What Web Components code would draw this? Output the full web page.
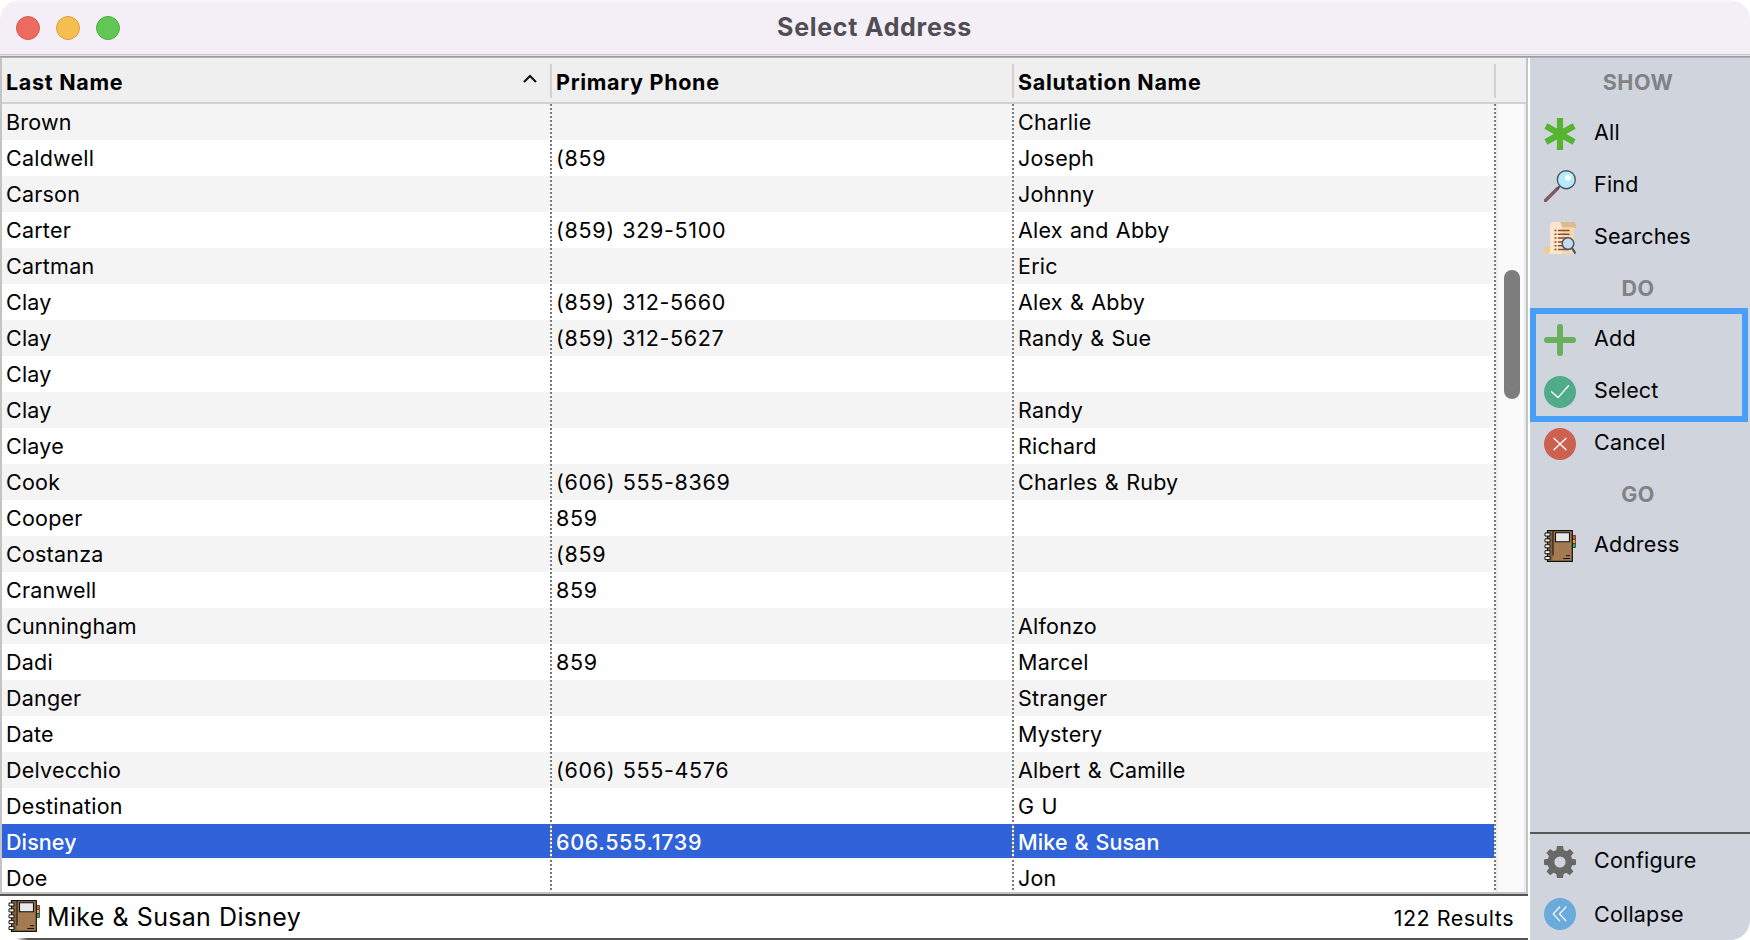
<!DOCTYPE html>
<html lang="en">
<head>
<meta charset="utf-8">
<title>Select Address</title>
<style>
    body {
        margin: 0;
        background: #fff;
        font-family: Inter, "Liberation Sans", sans-serif;
    }
</style>
</head>
<body>
<address-window></address-window>

<script>
const ICONS = {
    all: `<g stroke="#56b431" stroke-width="6.2"><path d="M16 0v32M1.9 8 30.1 24M30.1 8 1.9 24"/></g>`,
    find: `<path d="M1.5 30.5 13.5 18.5" stroke="#7b5b5c" stroke-width="3.4" stroke-linecap="round"/>
        <path d="M13 19l3-3" stroke="#565064" stroke-width="2"/>
        <circle cx="22.3" cy="9.7" r="9" fill="#b4ecfb" stroke="#555366" stroke-width="1.4"/>
        <circle cx="24" cy="7.7" r="3" fill="#fff"/>`,
    searches: `<path d="M10 0h18q4 0 4 3v2q0 1-1 1H14z" fill="#dfba8d"/>
        <path d="M6 5q0-5 5-5h5q2 0 2 5h12v27H3l3-6z" fill="#fbe6c9"/>
        <path d="M18 6h12v26H18z" fill="#f7d7ae"/>
        <path d="M16 0q2 2 2 5.5h13q1 0 1-1.5 0-4-4-4z" fill="#dfba8d"/>
        <path d="M0 25h6v4q0 3-3 3t-3-3z" fill="#f0c99b"/>
        <g stroke="#8c4c2e" stroke-width="1.5"><path d="M10.5 8.6h2M14 8.6h11.5M10.5 12.3h2M14 12.3h11.5M10.5 16.1h2M14 16.1h11M10.5 19.9h2M14 19.9h5M10.5 23.7h2M14 23.7h5M10.5 27.5h2M14 27.5h10"/></g>
        <circle cx="24" cy="21.6" r="5.8" fill="#cbd9ec" stroke="#47566a" stroke-width="1.6"/>
        <path d="M28 26l3.5 5.5" stroke="#47566a" stroke-width="2.2"/>`,
    add: `<path d="M16 3v26M3 16h26" stroke="#68b05d" stroke-width="6" stroke-linecap="round"/>`,
    select: `<circle cx="16" cy="16" r="16" fill="#50ab8b"/><path d="M7.5 15.8 14 21.6 24.5 9.7" stroke="#fff" stroke-width="1.3" stroke-linecap="round"/>`,
    cancel: `<circle cx="16" cy="16" r="16" fill="#cd614f"/><path d="M10 10.2 22 21.8M22 10.2 10 21.8" stroke="#fff" stroke-width="1.3" stroke-linecap="round"/>`,
    address: `<path d="M28 5.5h3.5v4H28z" fill="#df4c30" stroke="#302822" stroke-width=".7"/>
        <path d="M28 9.5h3.5v4H28z" fill="#e9ae2b" stroke="#302822" stroke-width=".7"/>
        <path d="M28 13.5h3.5v4H28z" fill="#36a55d" stroke="#302822" stroke-width=".7"/>
        <path d="M3.5.7h24.800v30.600H3.500z" fill="#a47a4f" stroke="#111" stroke-width="1.2"/>
        <path d="M4 1.2h4.500v29.600H4z" fill="#80603f"/><path d="M9 1v24.500" stroke="#17120e" stroke-width="1.1"/>
        <path d="M11.5 2.700h14v9h-14z" fill="#e5e9e9" stroke="#111" stroke-width="1.1"/>
        <path d="M22 25.700h4M19.300 28.500h6.700" stroke="#111"/>
        <g fill="#fff" stroke="#111"><path d="M1 3h5v3H1zM1 8.900h5v3H1zM1 14.800h5v3H1zM1 20.700h5v3H1zM1 26.600h5v3H1z"/></g>`,
    configure: `<path fill="#686868" fill-rule="evenodd" d="M13 0h6l.7 4.100 2.900 1.200L26 2.900 29.600 7 27 10.100l1.100 2.700 3.900.7v5.200l-3.900.7-1.200 2.800 2.500 3.300-3.700 3.700-3.300-2.400-2.800 1.100L19 32h-6l-.7-4.100-2.800-1.100-3.300 2.400-3.700-3.700L5 22.200l-1.200-2.800-3.800-.7v-5.200l3.900-.7L5 10.100 2.400 7 6 2.900l3.500 2.400 2.800-1.200zM16 10.400a5.600 5.600 0 1 0 0 11.200 5.600 5.600 0 0 0 0-11.200z"/>`,
    collapse: `<circle cx="16" cy="16" r="16" fill="#6babdc"/><path d="M15.700 9 9.200 15.900 15.700 22.800M22 9l-6.500 6.900L22 22.800" stroke="#fff" stroke-width="1.2" stroke-linecap="round"/>`
};

const ROWS = [
    ['Brown', '', 'Charlie'],
    ['Caldwell', '(859', 'Joseph'],
    ['Carson', '', 'Johnny'],
    ['Carter', '(859) 329-5100', 'Alex and Abby'],
    ['Cartman', '', 'Eric'],
    ['Clay', '(859) 312-5660', 'Alex & Abby'],
    ['Clay', '(859) 312-5627', 'Randy & Sue'],
    ['Clay', '', ''],
    ['Clay', '', 'Randy'],
    ['Claye', '', 'Richard'],
    ['Cook', '(606) 555-8369', 'Charles & Ruby'],
    ['Cooper', '859', ''],
    ['Costanza', '(859', ''],
    ['Cranwell', '859', ''],
    ['Cunningham', '', 'Alfonzo'],
    ['Dadi', '859', 'Marcel'],
    ['Danger', '', 'Stranger'],
    ['Date', '', 'Mystery'],
    ['Delvecchio', '(606) 555-4576', 'Albert & Camille'],
    ['Destination', '', 'G U'],
    ['Disney', '606.555.1739', 'Mike & Susan'],
    ['Doe', '', 'Jon']
];

class AppIcon extends HTMLElement {
    connectedCallback() {
        this.attachShadow({ mode: 'open' }).innerHTML = `
        <style>
            :host { display: block; flex: none; width: 32px; height: 32px; }
            svg { display: block; }
        </style>
        <svg width="32" height="32" viewBox="0 0 32 32" fill="none">${ICONS[this.getAttribute('name')]}</svg>
        `;
    }
}

class TitleBar extends HTMLElement {
    connectedCallback() {
        this.attachShadow({ mode: 'open' }).innerHTML = `
        <style>
            :host {
                display: grid;
                grid-template-columns: 1fr auto 1fr;
                box-sizing: border-box;
                height: 58px;
                padding-right: 2px;
                padding-left: 16px;
                background: linear-gradient(#f9f5fb 0 2px, #f4eff7 2px 54px, #c9c5cd 54px 55px, #e8e4ea 55px 56px, #9c999f 56px 57px, #b3b0b5 57px);
            }
            .lights { display: flex; gap: 16px; padding-top: 16px; }
            .lights i {
                box-sizing: border-box;
                width: 24px;
                height: 24px;
                border-radius: 50%;
                border: 1px solid #d65a50;
                background: #ed6a5f;
            }
            .lights i:nth-child(2) { background: #f5bf4f; border-color: #d8a13f; }
            .lights i:nth-child(3) { background: #62c655; border-color: #52a842; }
            .title {
                margin-left: -15px;
                font-size: 25px;
                line-height: 54px;
                font-weight: 700;
                letter-spacing: 0.72px;
                color: #514d55;
            }
        </style>
        <div class="lights"><i></i><i></i><i></i></div>
        <div class="title"><slot></slot></div>
        `;
    }
}

class AddressRow extends HTMLElement {
    connectedCallback() {
        this.attachShadow({ mode: 'open' }).innerHTML = `
        <style>
            :host {
                display: grid;
                grid-template-columns: 550px 462px 480px;
                height: 36px;
                line-height: 36px;
                font-size: 21.5px;
                letter-spacing: 0.22px;
                word-spacing: 1px;
                white-space: pre;
            }
            :host(:nth-child(odd)) { background: #f4f4f4; }
            :host([selected]) {
                background: linear-gradient(#3063d9 34px, #fff 34px);
                color: #fff;
                font-weight: 500;
                letter-spacing: 0.1px;
            }
            ::slotted(span) { padding-left: 4px; }
            ::slotted(span:nth-child(2)) { letter-spacing: 0.65px; }
        </style>
        <slot></slot>
        `;
    }
}

class AddressTable extends HTMLElement {
    connectedCallback() {
        const rows = ROWS.map(row => `
            <address-row${row[0] === 'Disney' ? ' selected' : ''}>${row.map(text => `<span>${text.replace('&', '&amp;')}</span>`).join('')}</address-row>`).join('');
        this.attachShadow({ mode: 'open' }).innerHTML = `
        <style>
            :host {
                display: block;
                box-sizing: border-box;
                width: 1528px;
                height: 836px;
                border: solid #c4c4c4;
                border-width: 0 2px 2px;
            }
            .head {
                display: grid;
                grid-template-columns: 550px 462px 482px 1fr;
                box-sizing: border-box;
                height: 46px;
                padding: 6px 0;
                border-bottom: 2px solid #d1d1d1;
                background: #efefef;
                font-size: 21.5px;
                font-weight: 700;
                letter-spacing: 0.7px;
                line-height: 37px;
            }
            .head div {
                display: flex;
                justify-content: space-between;
                box-sizing: border-box;
                height: 34px;
                padding-left: 4px;
                border-right: 2px solid #d2d2d2;
            }
            .head div:last-child { border: 0; }
            .head svg { margin: 9px 12px 0 0; }
            .body {
                position: relative;
                display: flex;
                height: 788px;
                overflow: hidden;
            }
            .rows { width: 1492px; }
            .rule {
                position: absolute;
                top: 0;
                bottom: 0;
                width: 2px;
                background: repeating-linear-gradient(#777 0 2px, #fff 2px 4px);
            }
            .scroll {
                box-sizing: border-box;
                width: 30px;
                margin-left: 2px;
                border-left: 2px solid #ececec;
                border-right: 2px solid #eaeaea;
                background: #fafafa;
                padding: 166px 0 0 6px;
            }
            .thumb { width: 16px; height: 129px; border-radius: 8px; background: #7d7d7d; }
        </style>
        <div class="head">
            <div>Last Name<svg width="16" height="12" fill="none"><path d="M2 9 8 3l6 6" stroke="#111" stroke-width="2"/></svg></div>
            <div>Primary Phone</div>
            <div>Salutation Name</div>
            <div></div>
        </div>
        <div class="body">
            <div class="rows">${rows}</div>
            <div class="scroll"><div class="thumb"></div></div>
            <div class="rule" style="left: 548px"></div>
            <div class="rule" style="left: 1010px"></div>
            <div class="rule" style="left: 1492px"></div>
        </div>
        `;
    }
}

class StatusBar extends HTMLElement {
    connectedCallback() {
        this.attachShadow({ mode: 'open' }).innerHTML = `
        <style>
            :host {
                display: flex;
                align-items: center;
                box-sizing: border-box;
                width: 1528px;
                height: 46px;
                padding: 0 14px 0 8px;
                border-top: 2px solid #555;
                background: linear-gradient(90deg, #fff 16px, #555 28px) bottom / 100% 2px no-repeat #fff;
            }
            .name {
                flex: 1;
                margin: -2px 0 0 7px;
                font-size: 25px;
                line-height: 40px;
                letter-spacing: 0.3px;
                word-spacing: 0.6px;
            }
            .count { font-size: 21.5px; line-height: 42px; letter-spacing: 0.5px; }
            app-icon { margin-top: -4px; }
        </style>
        <app-icon name="address"></app-icon>
        <div class="name"><slot></slot></div>
        <div class="count"><slot name="count"></slot></div>
        `;
    }
}

class SideItem extends HTMLElement {
    connectedCallback() {
        this.attachShadow({ mode: 'open' }).innerHTML = `
        <style>
            :host {
                display: flex;
                align-items: center;
                gap: 18px;
                height: 52px;
                padding-left: 14px;
                font-size: 21.5px;
                letter-spacing: 0.2px;
            }
            .label { margin-top: -5px; }
            :host([icon="collapse"]) .label { margin-top: -1px; }
        </style>
        <app-icon name="${this.getAttribute('icon')}"></app-icon>
        <div class="label"><slot></slot></div>
        `;
    }
}

class SideBar extends HTMLElement {
    connectedCallback() {
        this.attachShadow({ mode: 'open' }).innerHTML = `
        <style>
            :host {
                display: flex;
                flex-direction: column;
                width: 220px;
                height: 882px;
                background: #d0d4dd;
            }
            h2 {
                margin: 0;
                height: 50px;
                padding-right: 4px;
                font-size: 21.5px;
                line-height: 48px;
                font-weight: 700;
                letter-spacing: 0.5px;
                text-align: center;
                color: #808284;
            }
            .group { height: 156px; }
            .marked { position: relative; }
            .marked::before {
                content: "";
                position: absolute;
                box-sizing: border-box;
                left: 0;
                top: -6px;
                width: 218px;
                height: 114px;
                border: 6px solid #489ff8;
            }
            .bottom {
                box-sizing: border-box;
                height: 108px;
                margin-top: auto;
                padding-top: 2px;
                border-top: 2px solid #555;
            }
        </style>
        <h2>SHOW</h2>
        <div class="group">
            <side-item icon="all">All</side-item>
            <side-item icon="find">Find</side-item>
            <side-item icon="searches">Searches</side-item>
        </div>
        <h2>DO</h2>
        <div class="group">
            <div class="marked">
                <side-item icon="add">Add</side-item>
                <side-item icon="select">Select</side-item>
            </div>
            <side-item icon="cancel">Cancel</side-item>
        </div>
        <h2>GO</h2>
        <side-item icon="address">Address</side-item>
        <div class="bottom">
            <side-item icon="configure">Configure</side-item>
            <side-item icon="collapse">Collapse</side-item>
        </div>
        `;
    }
}

class AddressWindow extends HTMLElement {
    connectedCallback() {
        this.attachShadow({ mode: 'open' }).innerHTML = `
        <style>
            :host {
                display: block;
                width: 1750px;
                height: 940px;
                border-radius: 20px;
                overflow: hidden;
                color: #000;
            }
            .content { display: flex; justify-content: space-between; }
        </style>
        <title-bar>Select Address</title-bar>
        <div class="content">
            <div>
                <address-table></address-table>
                <status-bar>Mike &amp; Susan Disney<span slot="count">122 Results</span></status-bar>
            </div>
            <side-bar></side-bar>
        </div>
        `;
    }
}

customElements.define('app-icon', AppIcon);
customElements.define('title-bar', TitleBar);
customElements.define('address-row', AddressRow);
customElements.define('address-table', AddressTable);
customElements.define('status-bar', StatusBar);
customElements.define('side-item', SideItem);
customElements.define('side-bar', SideBar);
customElements.define('address-window', AddressWindow);
</script>
</body>
</html>
